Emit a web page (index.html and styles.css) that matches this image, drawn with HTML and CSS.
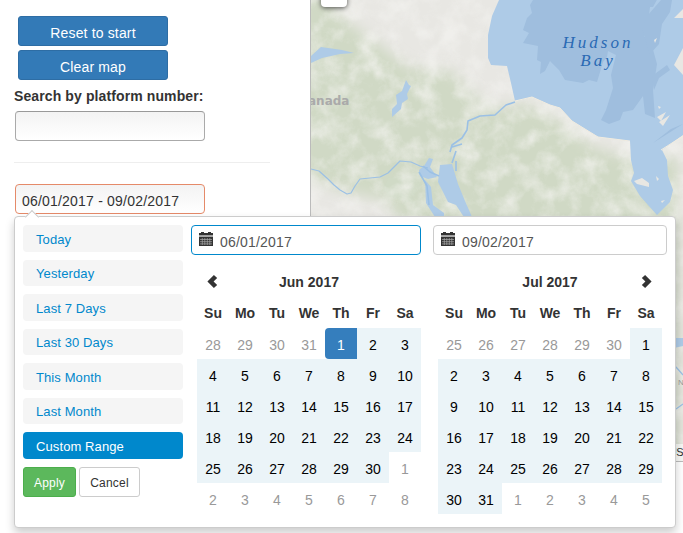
FILE: index.html
```html
<!DOCTYPE html>
<html lang="en">
<head>
<meta charset="utf-8">
<title>Platform map</title>
<link rel="stylesheet" href="styles.css">
</head>
<body>
<svg width="0" height="0" class="defs">
  <symbol id="calendar" viewBox="0 0 14 14"><path fill="#333" d="M0 1h2V0h3v1h4V0h3v1h2v2.5H0z"/><path fill="#aaa" d="M0 3.5h14V5H0z"/><path fill="#333" d="M0 5h14v9H0z"/><path stroke="#aaa" stroke-width=".7" d="M1 7.5h12M1 9.7h12M1 11.9h12M3.3 6v7M5.8 6v7M8.3 6v7M10.8 6v7"/></symbol>
  <symbol id="chevron" viewBox="0 0 10 12"><path fill="#333" d="M6.3 0 9.3 2.8 6 6l3.3 3.2L6.3 12 .3 6z"/></symbol>
</svg>
<main class="page">
  <aside class="sidebar">
    <button class="side-btn">Reset to start</button>
    <button class="side-btn">Clear map</button>
    <label class="search-label" for="platform">Search by platform number:</label>
    <input class="field" id="platform" type="text">
    <hr>
    <input class="field field-active" type="text" value="06/01/2017 - 09/02/2017">
  </aside>
  <section class="map">
    <svg class="terrain" width="372" height="461" viewBox="311 0 372 461">
      <defs>
        <filter id="mottle" x="0" y="0" width="100%" height="100%">
          <feTurbulence type="fractalNoise" baseFrequency=".05" numOctaves="7" seed="8"/>
          <feColorMatrix values="0 0 0 0 .91  0 0 0 0 .905  0 0 0 0 .88  2 .8 0 0 -1.15"/>
          <feComposite in2="SourceGraphic" operator="in"/>
        </filter>
        <filter id="soft"><feGaussianBlur stdDeviation="7"/></filter>
      </defs>
      <path fill="#e8e7e3" d="M311 0h372v461H311z"/>
      <path filter="url(#soft)" fill="#d0d9c5" d="M300-5h22l25 27 35 25 25 20 45 5 24 25 20 12 30-5 32 15 35 28 25 8 60 3v315H490l-20-245-62 5-12-15-10-18-28-5-58-18z"/>
      <path fill="#cfd9c5" d="m388 178 30-6 4 14-10 12 11 15-13 5 3-13-11-5-12-3-7-8z" opacity=".8"/>
      <path filter="url(#mottle)" d="M311 0h372v461H311z" opacity=".65"/>
      <g fill="#aecbe7">
        <path d="M499 0 492 16 488 35 488 58 491 65 507 66 511 83 515 101 521 100 532 97 550 105 560 108 572 121 598 137 630 141 631 160 634 173 631 181 640 196 648 205 657 215 664 208 670 202 673 190 668 176 667 160 662 150 683 135V0z"/>
        <path d="m311 56 10-9 21 3 12 3-14 1-18 4-11 5zM406 80l3 5 2 1-4 8 1 5-6 4-1 6-9 8v-8l5-5-1-9 6-4zM440 165l12-1 6 20 7 17 7 16h-8l-8-12-8-3-10-20zM419 170l5-4 5-8 4 1-3 8 7 10-9 2-8-3zM425 180l6 7 2 18 11 8v4h-9l-9-14z"/>
        <path d="M674 338h9v8l-9 2z"/>
      </g>
      <g fill="#9fbede">
        <path d="m533 0-3 5 2 8-5 5-4 12 6 3-6 10 15 3-1 14 4 2-1 12 5-3 5-10 9 9 6 10 18 3 6-3 8 2 6-20 4-5 1-6 8 4-5 20 2 13-7 22-5 10 8 4 11-4 3-8 10-2 10-14 2 18 10 4-2-28 4-26-5-18-8-10 4-13 2-16h3l6-11z"/>
        <path d="m661 0 11 0-2 12-8 12-3 20-9 10-4-12-4-14 6-13zM683 124l-30 19 18-14zM667 65l-15 11 2 14 5-12 11-8z"/>
      </g>
      <g fill="#e8e7e3"><path d="M683 48 674 65l9 10zM683 9l-9 9h9zM657 117l9-5-5 9zM659 122l11-7-7 11zM658 106l3 1-2 2zM654 40l3-2-2 5z"/><path d="m634 181 8-3 7 5v4l-4-1-8-2zM656 176l3 3-2 2zM661 201l4-1-3 3z"/></g>
      <g fill="none" stroke="#9bc0e5" stroke-width="1.2" stroke-linejoin="round">
        <path d="m311 169 8 2 9 8 6 6 6 5 7 4 4-1 4-7 5-7 20-2 8-4 7-7 5-5 11 1 9 4 8 2"/>
        <path d="m515 102-9 3-11 10-15 1-12 5-1 9-5 8-10 7-2 7m2-5 10-3m-6 7-4 12m4-2v10m-33-5 7 6 9 4m-20-4 8 14 2 19" stroke-width="1.6"/>
        <path d="M670 370l6-3 7 8M676 409l7-5"/>
      </g>
      <path fill="none" stroke="#f1ece0" d="m515 101 17-4 18 8 10 3 12 13 26 16 32 4m31 9 22-14"/>
    </svg>
    <div class="map-label country">anada</div>
    <div class="map-label bay"><div>Hudson</div><div>Bay</div></div>
    <div class="map-control"></div>
    <div class="map-label place">N</div>
    <div class="credit">US</div>
  </section>
</main>
<div class="picker">
  <div class="ranges">
    <ul>
      <li>Today</li><li>Yesterday</li><li>Last 7 Days</li><li>Last 30 Days</li><li>This Month</li><li>Last Month</li><li class="active">Custom Range</li>
    </ul>
    <div class="actions"><button class="apply">Apply</button><button class="cancel">Cancel</button></div>
  </div>
  <div class="calendar left">
    <div class="date-box focus"><svg class="cal-icon"><use href="#calendar"/></svg>06/01/2017</div>
    <div class="grid" data-first="28" data-prev="31" data-days="30"><div class="head"><svg class="arrow"><use href="#chevron"/></svg></div><div class="head title">Jun 2017</div><div class="head"></div></div>
  </div>
  <div class="calendar right">
    <div class="date-box"><svg class="cal-icon"><use href="#calendar"/></svg>09/02/2017</div>
    <div class="grid" data-first="25" data-prev="30" data-days="31"><div class="head"></div><div class="head title">Jul 2017</div><div class="head"><svg class="arrow next"><use href="#chevron"/></svg></div></div>
  </div>
</div>
<script src="calendar.js"></script>
</body>
</html>
```
FILE: styles.css
```css
* { box-sizing: border-box; }
body { margin: 0; width: 683px; height: 533px; overflow: hidden; background: #fff; color: #333; font: 14px/20px "Liberation Sans", Arial, sans-serif; position: relative; }
button, input { font: inherit; }
.defs { position: absolute; }
.page { display: flex; height: 533px; }
.sidebar { width: 310px; padding: 16px 40px 0 14px; display: flex; flex-direction: column; align-items: flex-start; }
.side-btn { width: 150px; height: 30px; margin: 0 0 4px 4px; padding: 3px 0 0; border: 1px solid #2e6da4; border-radius: 3px; background: #337ab7; color: #fff; font-size: 14px; letter-spacing: .15px; }
.search-label { margin: 2px 0 5px; font-weight: bold; letter-spacing: .11px; white-space: nowrap; }
.field { width: 190px; height: 30px; margin-left: 1px; padding: 4px 6px 0; border: 1px solid #aaa; border-top-color: #999; border-radius: 4px; background: linear-gradient(#f3f3f3, #fff); color: #333; letter-spacing: .2px; outline: 0; }
hr { width: 256px; height: 1px; margin: 21px 0; border: 0; background: #eee; }
.field-active { border-color: #e58a69; }
.map { position: relative; width: 373px; height: 462px; border-left: 1px solid #bbb; border-bottom: 1px solid #bbb; overflow: hidden; background: #e8e7e3; }
.terrain { display: block; }
.map-label { position: absolute; }
.country { left: -3px; top: 91px; color: #aaa; font: bold 12px/20px "DejaVu Sans", sans-serif; }
.bay { left: 227px; top: 34px; width: 120px; text-align: center; color: #2a6ab4; font: italic 17px/18px "Liberation Serif", serif; letter-spacing: 3px; }
.place { left: 367px; top: 376px; font-size: 8px; line-height: 14px; color: #999; }
.map-control { position: absolute; left: 10px; top: -20px; width: 26px; height: 27px; background: #fff; border-radius: 4px; box-shadow: 0 1px 5px rgba(0,0,0,.65); }
.credit { position: absolute; right: 0; bottom: 0; background: rgba(255,255,255,.7); font-size: 11px; line-height: 17px; letter-spacing: -.5px; }
.picker { position: absolute; left: 14px; top: 216px; width: 662px; height: 312px; padding: 8px; display: flex; background: #fff; border: 1px solid #ccc; border-radius: 4px; box-shadow: 0 5px 10px rgba(0,0,0,.2); }
.picker::before { content: ""; position: absolute; left: 12px; top: -5px; width: 9px; height: 9px; transform: rotate(45deg); background: #fff; border: solid #ccc; border-width: 1px 0 0 1px; }
.ranges { width: 160px; margin-right: 8px; }
ul { list-style: none; margin: 0 0 8px; padding: 0; display: grid; grid-auto-rows: 26.5px; row-gap: 8px; }
li { padding: 1.9px 13px 0; line-height: 26px; font-size: 13px; color: #08c; background: #f5f5f5; border-radius: 4px; letter-spacing: .1px; }
li.active { background: #08c; color: #fff; }
.actions { display: flex; gap: 3px; }
.actions button { height: 30px; padding: 2px 0 0; border: 1px solid #ccc; border-radius: 3px; background: #fff; color: #333; font-size: 12px; letter-spacing: .2px; }
.actions .apply { width: 53px; background: #5cb85c; border-color: #4cae4c; color: #fff; }
.actions .cancel { width: 61px; }
.calendar { width: 230px; }
.right { width: 234px; margin-left: 12px; }
.date-box { display: flex; height: 30px; padding: 5px 7px 0; border: 1px solid #ccc; border-radius: 4px; color: #555; line-height: 22px; letter-spacing: .2px; }
.date-box.focus { border-color: #08c; }
.cal-icon { width: 14px; height: 14px; margin: 1px 7px 0 0; }
.grid { display: grid; grid-template-columns: repeat(7, 32px); grid-auto-rows: 31px; margin: 11px 0 0 6px; text-align: center; line-height: 34px; color: #000; }
.right .grid { margin-left: 5px; }
.grid .head { font-weight: bold; color: #333; line-height: 32px; }
.title { grid-column: span 5; }
.arrow { width: 11px; height: 13px; margin: -3px 1px 0 0; vertical-align: middle; }
.next { margin: -3px 0 0 1px; transform: scaleX(-1); }
.off { color: #999; }
.range { background: #ebf4f8; }
.start { background: #357ebd; color: #fff; border-radius: 4px 0 0 4px; }
```
FILE: calendar.js
```js
for (const grid of document.querySelectorAll('.grid')) {
  const first = +grid.dataset.first, prev = +grid.dataset.prev, days = +grid.dataset.days;
  const add = (text, cls) => {
    const cell = document.createElement('div');
    cell.textContent = text;
    cell.className = cls;
    grid.append(cell);
  };
  for (const name of ['Su', 'Mo', 'Tu', 'We', 'Th', 'Fr', 'Sa']) add(name, 'head');
  const lead = prev - first + 1;
  for (let i = 0; i < 42; i++) {
    const day = i - lead + 1;
    if (day < 1) add(first + i, 'off');
    else if (day > days) add(day - days, 'off');
    else add(day, day === 1 && days === 30 ? 'start' : 'range');
  }
}
```
